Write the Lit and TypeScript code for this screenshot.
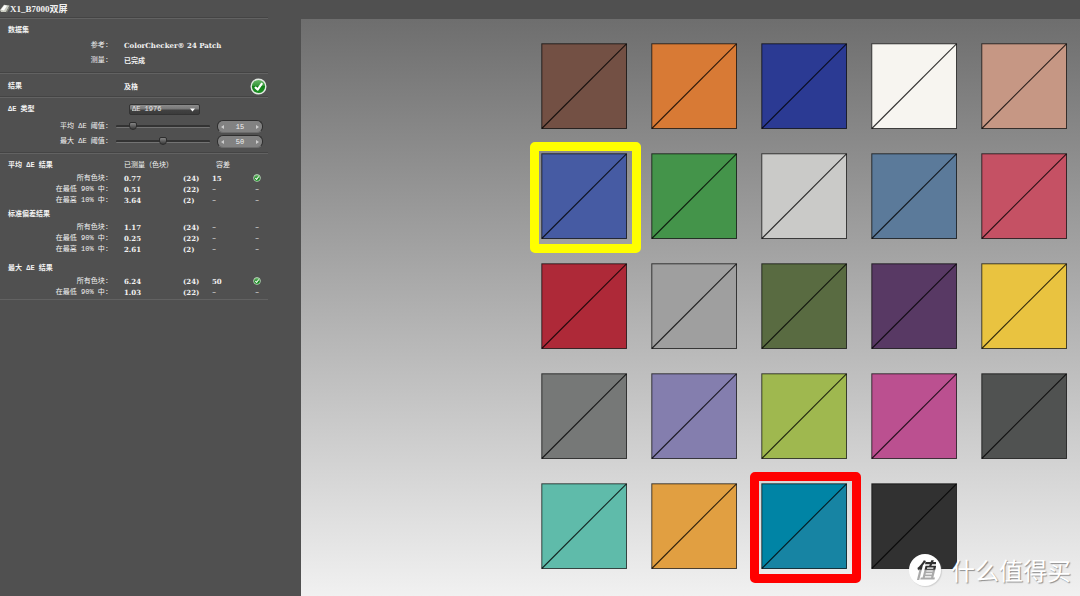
import { LitElement, html, svg, css, nothing } from "lit";
import { customElement, property, state } from "lit/decorators.js";

type Row = { label: string; value: string; count: string; limit?: string };

const average: Row[] = [
  { label: "所有色块:", value: "0.77", count: "(24)", limit: "15" },
  { label: "在最低 90% 中:", value: "0.51", count: "(22)" },
  { label: "在最高 10% 中:", value: "3.64", count: "(2)" },
];
const deviation: Row[] = [
  { label: "所有色块:", value: "1.17", count: "(24)" },
  { label: "在最低 90% 中:", value: "0.25", count: "(22)" },
  { label: "在最高 10% 中:", value: "2.61", count: "(2)" },
];
const maximum: Row[] = [
  { label: "所有色块:", value: "6.24", count: "(24)", limit: "50" },
  { label: "在最低 90% 中:", value: "1.03", count: "(22)" },
];

type Patch = { ref: string; measured?: string; mark?: "yellow" | "red" };

const patches: Patch[] = [
  { ref: "#735044" }, { ref: "#d87a35" }, { ref: "#2b3a93" }, { ref: "#f7f5f0" }, { ref: "#c69784" },
  { ref: "#465ba3", mark: "yellow" }, { ref: "#44944a" }, { ref: "#cacac8" }, { ref: "#5b7a9a" }, { ref: "#c55164" },
  { ref: "#ae2938" }, { ref: "#9f9f9f" }, { ref: "#596b41" }, { ref: "#583964" }, { ref: "#e9c340" },
  { ref: "#767877" }, { ref: "#847eae" }, { ref: "#9fb84f" }, { ref: "#bb5090" }, { ref: "#505251" },
  { ref: "#5fbbaa" }, { ref: "#e19f41" }, { ref: "#0084a5", measured: "#1784a3", mark: "red" }, { ref: "#313131" },
];

@customElement("pass-icon")
class PassIcon extends LitElement {
  static styles = css`
    :host { display: inline-flex; width: 8px; height: 8px; }
    :host([large]) { width: 17px; height: 17px; }
    svg { width: 100%; height: 100%; }
  `;
  render() {
    return html`<svg viewBox="0 0 17 17" role="img" aria-label="及格">
      <defs>
        <linearGradient id="g" x1="0" y1="0" x2="0" y2="1">
          <stop offset="0" stop-color="#6cba6c" />
          <stop offset=".45" stop-color="#36983a" />
          <stop offset=".5" stop-color="#128019" />
          <stop offset="1" stop-color="#1d9325" />
        </linearGradient>
      </defs>
      <circle cx="8.5" cy="8.5" r="7.3" fill="url(#g)" stroke="#e4ebe4" stroke-width="1.4" />
      <path d="M5 8.9 L7.6 11.6 L12.2 5.2" fill="none" stroke="#fff" stroke-width="2.2" stroke-linejoin="round" />
    </svg>`;
  }
}

@customElement("color-patch")
class ColorPatch extends LitElement {
  static styles = css`
    :host { display: block; position: relative; aspect-ratio: 1; }
    svg { display: block; width: 100%; height: 100%; }
    .mark { position: absolute; top: -11px; left: -11px; width: 111px; height: 111px; box-sizing: border-box; border: 9px solid; border-radius: 5px; }
    .yellow { border-color: #ffff00; }
    .red { border-color: #ff0000; }
  `;
  @property({ attribute: false }) patch!: Patch;
  render() {
    const { ref, measured, mark } = this.patch;
    return html`<svg viewBox="0 0 86 86">
        <rect x=".8" y=".8" width="84.7" height="84.7" fill=${ref} />
        ${measured ? svg`<path d="M85.5 .8V85.5H.8Z" fill=${measured} />` : nothing}
        <path d="M.8 85.5L85.5 .8" stroke="#000" stroke-opacity=".8" stroke-width="1.1" />
        <rect x=".8" y=".8" width="84.7" height="84.7" fill="none" stroke="#000" stroke-opacity=".68" />
      </svg>
      ${mark ? html`<div class="mark ${mark}"></div>` : nothing}`;
  }
}

@customElement("app-root")
class AppRoot extends LitElement {
  static styles = css`
    :host {
      display: flex;
      min-height: 100vh;
      background: #505050;
      color: #f2f2f2;
      font: 7px/11px "Liberation Mono", "Noto Sans CJK SC", monospace;
    }
    * { box-sizing: border-box; }
    .side { flex: none; width: 301px; padding-right: 33px; }
    h1, h2, p, dl, dd { margin: 0; }
    h1 { display: flex; align-items: center; height: 17px; font: bold 9px/16px "Liberation Serif", "Noto Sans CJK SC", serif; }
    h1 svg { width: 10px; height: 9px; }
    h2 { font-size: 7px; line-height: 11px; padding-left: 8px; }
    section { border-top: 1px solid #444; box-shadow: inset 0 1px #626262; }
    .bold { font-family: "DejaVu Serif", "Noto Sans CJK SC", serif; font-weight: bold; }
    .data { padding: 7px 0 6px; }
    .pair { display: grid; grid-template-columns: 109px 1fr; column-gap: 15px; row-gap: 4px; line-height: 11px; padding-top: 4px; }
    .pair dt, .name { text-align: right; }
    .result { display: grid; grid-template-columns: 124px 1fr auto; align-items: center; height: 24px; padding: 3px 1px 0 0; }
    .type { padding: 7px 0 3px; }
    .line { display: grid; grid-template-columns: 109px 94px 46px; column-gap: 7px; align-items: center; height: 15px; }
    .line.pick { grid-template-columns: 109px auto; justify-content: start; column-gap: 20px; height: 11px; margin-bottom: 4px; }
    .drop { position: relative; display: flex; width: 71px; }
    .drop svg { position: absolute; right: 5px; top: 4px; width: 5px; height: 4px; pointer-events: none; }
    select {
      appearance: none; width: 100%; height: 11px; padding: 0 0 2px 2px; border: 1px solid #333; border-radius: 2px;
      background: linear-gradient(#8b8b8b, #777 45%, #414141 55%, #3b3b3b); color: #e6e6e6; font: inherit; line-height: 8px;
    }
    input { font: inherit; }
    input[type="range"] { appearance: none; width: 100%; height: 10px; margin: 0; background: none; }
    input[type="range"]::-webkit-slider-runnable-track { height: 3px; background: #333; border-bottom: 1px solid #737373; border-radius: 1px; }
    input[type="range"]::-webkit-slider-thumb {
      appearance: none; width: 8px; height: 8px; margin-top: -3px; background: linear-gradient(#858585, #3a3a3a);
      border: 1px solid #2d2d2d; border-radius: 2px 2px 4px 4px;
    }
    .spin { display: flex; align-items: center; height: 13px; border: 1px solid #2e2e2e; border-bottom-color: #6c6c6c; border-radius: 6px; background: #828282; }
    .spin input { flex: 1; min-width: 0; height: 11px; padding: 1px 0 0; border: 0; background: none; color: #f2f2f2; text-align: center; }
    .spin button { display: flex; align-items: center; justify-content: center; width: 9px; height: 10px; padding: 0; border: 0; background: none; }
    .spin svg { width: 3px; height: 4px; }
    .scores { padding: 4px 0 1px; border-bottom: 1px solid #626262; }
    table { width: 100%; table-layout: fixed; border-collapse: collapse; }
    td, th { padding: 0; height: 11px; line-height: 11px; font-weight: normal; text-align: left; white-space: nowrap; }
    .c-name { width: 124px; } .c-value { width: 59px; } .c-count { width: 17px; } .c-limit { width: 46px; }
    .head th { height: 16px; line-height: 16px; }
    .head.apart th { height: 21px; padding-top: 5px; }
    .head .title { padding-left: 8px; font-weight: bold; }
    .head .mid { text-align: center; }
    th.name { padding-right: 15px; text-align: right; }
    td.limit { padding-left: 12px; }
    td.state { text-align: center; }
    td.state pass-icon { vertical-align: middle; }
    .stage { position: relative; flex: 1; margin-top: 19px; padding: 24px 13px 28px; background: linear-gradient(#6e6e6e, #f1f1f1); }
    .patches { display: grid; grid-template-columns: repeat(5, 86px); gap: 24px; justify-content: end; }
    .brand { position: absolute; right: 9px; bottom: 11px; display: flex; align-items: center; gap: 10px; font: 24px/32px "Noto Sans CJK SC", sans-serif; color: #fff; text-shadow: 1px 1px 1px #8e8e8e; }
    .seal { display: flex; align-items: center; justify-content: center; width: 32px; height: 32px; padding-bottom: 2px; border-radius: 50%; background: #fff; box-shadow: 1px 1px 1px #9995; }
    .seal span { font-size: 21px; font-weight: bold; font-style: italic; text-shadow: none; color: transparent; background: linear-gradient(#303030 50%, #aaa 55%); background-clip: text; -webkit-background-clip: text; }
  `;

  @state() private mean = 15;
  @state() private peak = 50;

  private threshold(id: string, label: string, value: number, set: (n: number) => void) {
    const change = (e: Event) => set(Number((e.target as HTMLInputElement).value));
    return html`<div class="line">
      <label class="name" for=${id}>${label}</label>
      <input id=${id} type="range" min="0" max="100" .value=${String(value)} @input=${change} />
      <div class="spin">
        <button aria-label="减少" @click=${() => set(value - 1)}><svg viewBox="0 0 3 4"><path d="M3 0V4L0 2Z" fill="#ccc" /></svg></button>
        <input type="text" aria-label=${label} .value=${String(value)} @change=${change} />
        <button aria-label="增加" @click=${() => set(value + 1)}><svg viewBox="0 0 3 4"><path d="M0 0V4L3 2Z" fill="#ccc" /></svg></button>
      </div>
    </div>`;
  }

  private rows(rows: Row[]) {
    return rows.map((r) => html`<tr>
      <th class="name" scope="row">${r.label}</th>
      <td class="bold">${r.value}</td>
      <td class="bold">${r.count}</td>
      <td class="limit ${r.limit ? "bold" : ""}">${r.limit ?? "–"}</td>
      <td class="state">${r.limit ? html`<pass-icon></pass-icon>` : "–"}</td>
    </tr>`);
  }

  render() {
    return html`
      <aside class="side">
        <h1>
          <svg viewBox="0 0 10 9"><path d="M0 6L4 .8L9.5 1.5L6 8L1 8Z" fill="#c9cbc0" /><path d="M1 5.8L4.3 1.3L7 1.7L4 6.5Z" fill="#fff" /><path d="M6 8L9.5 1.5V4L7 8.4Z" fill="#84867c" /></svg>
          X1_B7000双屏
        </h1>
        <section class="data">
          <h2>数据集</h2>
          <dl class="pair">
            <dt>参考:</dt><dd class="bold">ColorChecker® 24 Patch</dd>
            <dt>测量:</dt><dd class="bold">已完成</dd>
          </dl>
        </section>
        <section class="result">
          <h2>结果</h2>
          <p class="bold">及格</p>
          <pass-icon large></pass-icon>
        </section>
        <section class="type">
          <div class="line pick">
            <h2><label for="type">ΔE 类型</label></h2>
            <div class="drop">
              <select id="type"><option>ΔE 1976</option></select>
              <svg viewBox="0 0 5 4"><path d="M0 .5H5L2.5 3.5Z" fill="#fff" /></svg>
            </div>
          </div>
          ${this.threshold("mean", "平均 ΔE 阈值:", this.mean, (n) => (this.mean = n))}
          ${this.threshold("peak", "最大 ΔE 阈值:", this.peak, (n) => (this.peak = n))}
        </section>
        <section class="scores">
          <table>
            <colgroup><col class="c-name" /><col class="c-value" /><col class="c-count" /><col class="c-limit" /><col /></colgroup>
            <tbody>
              <tr class="head"><th class="title">平均 ΔE 结果</th><th colspan="2">已测量（色块）</th><th class="mid">容差</th><th></th></tr>
              ${this.rows(average)}
            </tbody>
            <tbody>
              <tr class="head"><th class="title" colspan="5">标准偏差结果</th></tr>
              ${this.rows(deviation)}
            </tbody>
            <tbody>
              <tr class="head apart"><th class="title" colspan="5">最大 ΔE 结果</th></tr>
              ${this.rows(maximum)}
            </tbody>
          </table>
        </section>
      </aside>
      <main class="stage">
        <div class="patches">${patches.map((p) => html`<color-patch .patch=${p}></color-patch>`)}</div>
        <div class="brand"><div class="seal"><span>值</span></div>什么值得买</div>
      </main>
    `;
  }
}
